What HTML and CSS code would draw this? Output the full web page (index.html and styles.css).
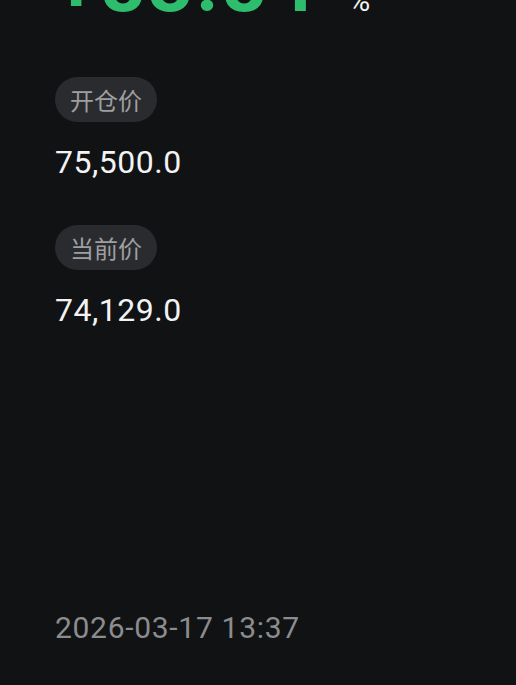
FILE: index.html
```html
<!DOCTYPE html>
<html lang="zh-CN">
<head>
<meta charset="utf-8">
<title>持仓</title>
<link rel="stylesheet" href="styles.css">
</head>
<body>
<main class="card">
  <div class="pnl"><span class="pnl-value">+83.84</span><span class="pnl-unit">%</span></div>
  <section class="field field-first">
    <span class="pill">开仓价</span>
    <div class="value">75,500.0</div>
  </section>
  <section class="field">
    <span class="pill">当前价</span>
    <div class="value">74,129.0</div>
  </section>
  <div class="time">2026-03-17 13:37</div>
</main>
</body>
</html>
```
FILE: styles.css
```css
html, body {
  margin: 0;
  padding: 0;
  background: #111214;
  height: 100%;
  overflow: hidden;
}
.card {
  padding-left: 55px;
  font-family: Roboto, "Noto Sans CJK SC", sans-serif;
}
.pnl {
  margin-top: -53.6px;
  height: 78px;
  line-height: 78px;
  white-space: nowrap;
}
.pnl-value {
  font-size: 78px;
  font-weight: 700;
  color: #2ebd6c;
  letter-spacing: 3px;
}
.pnl-unit {
  font-size: 30px;
  color: #f2f2f2;
  margin-left: 31px;
}
.field {
  display: flex;
  flex-direction: column;
  align-items: flex-start;
  margin-top: 43px;
}
.field-first {
  margin-top: 52.6px;
}
.pill {
  display: inline-block;
  height: 45px;
  line-height: 45px;
  padding: 0 15px;
  border-radius: 23px;
  background: #2a2b2e;
  color: #9e9fa1;
  font-family: "Noto Sans CJK SC", sans-serif;
  font-size: 24px;
}
.value {
  margin-top: 20px;
  font-size: 32px;
  line-height: 40px;
  letter-spacing: 0.5px;
  color: #f3f3f3;
}
.time {
  margin-top: 278px;
  font-size: 30px;
  line-height: 40px;
  letter-spacing: 0.7px;
  color: #8b8c8e;
}
```
